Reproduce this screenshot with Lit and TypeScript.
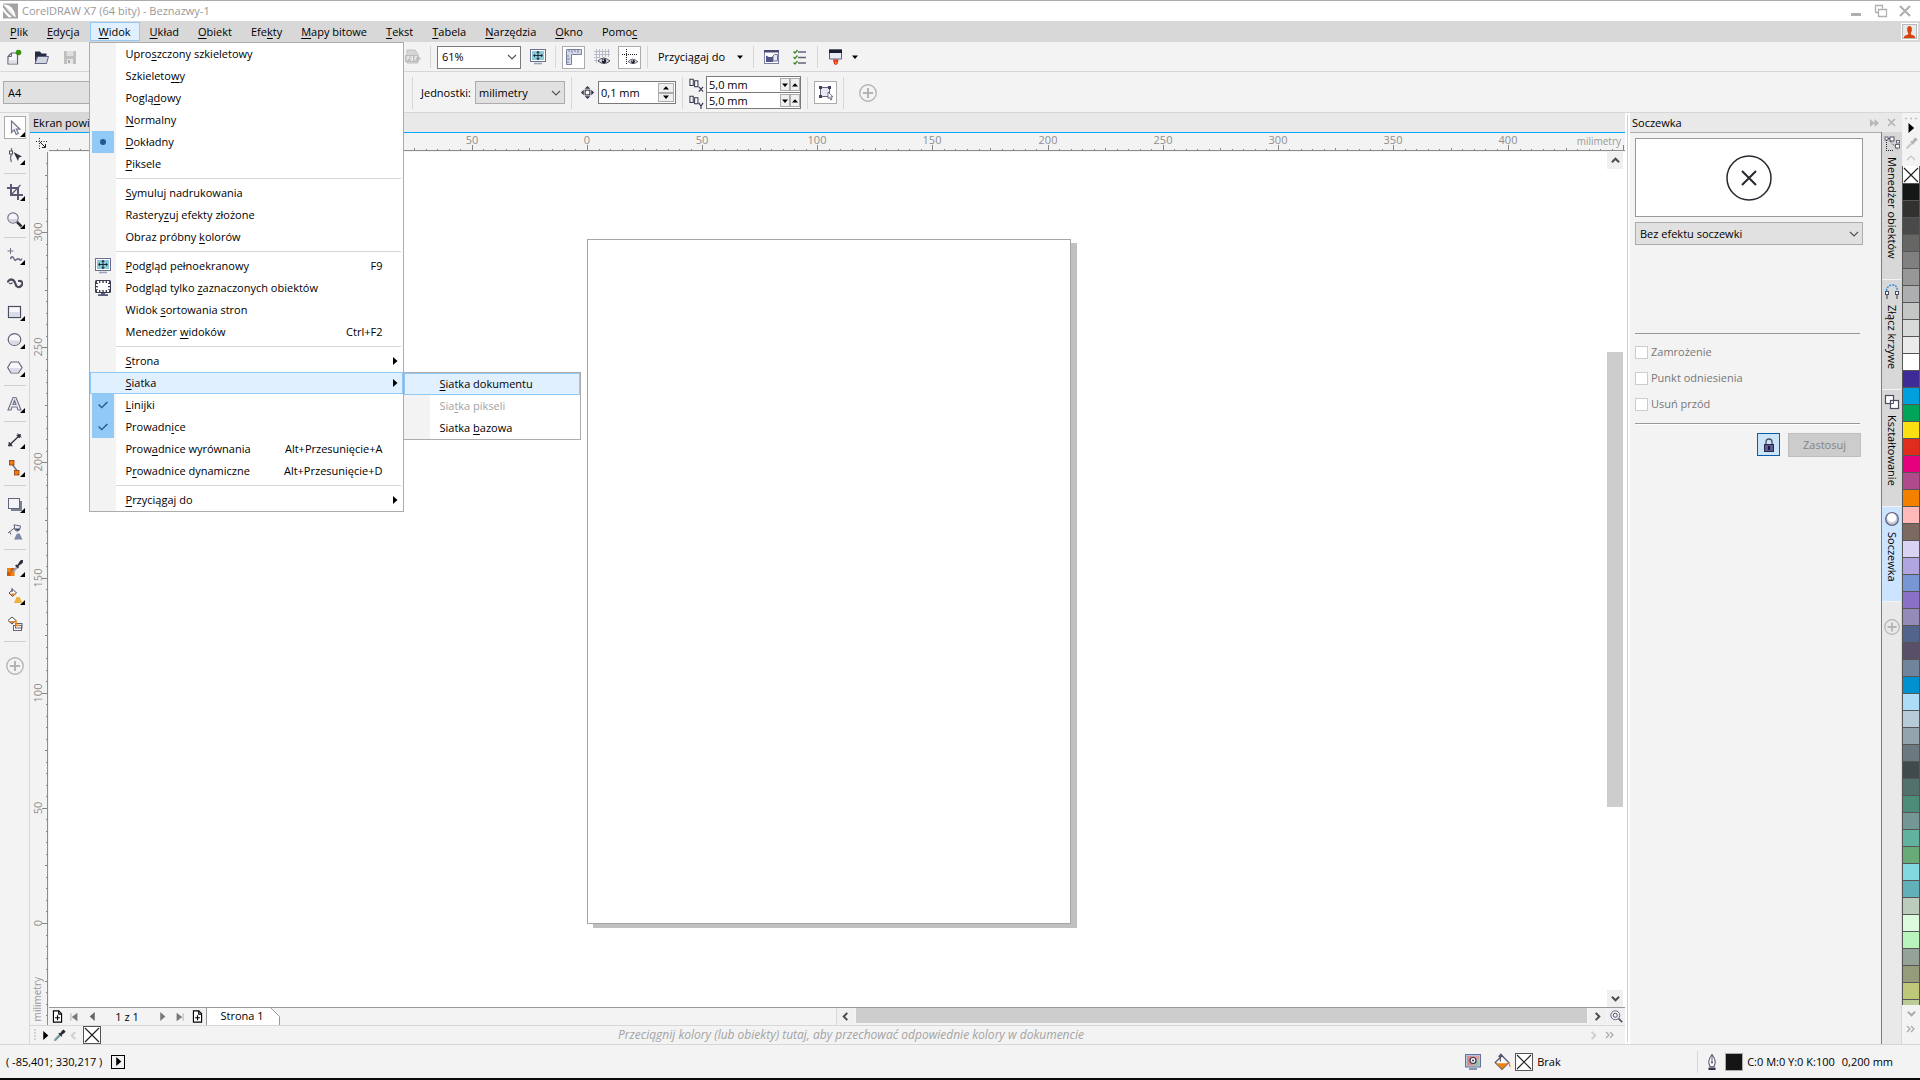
import { LitElement, html, svg, css, nothing, TemplateResult } from "lit";
import { customElement, property } from "lit/decorators.js";
import { classMap } from "lit/directives/class-map.js";
import { styleMap } from "lit/directives/style-map.js";

const PX_PER_MM = 2.303;

/** Turns "_Plik" into a label whose letter after the underscore is the mnemonic. */
const mnemonic = (label: string) => {
  const at = label.indexOf("_");
  if (at < 0) return html`${label}`;
  return html`${label.slice(0, at)}<u>${label[at + 1]}</u>${label.slice(at + 2)}`;
};

const icon = (body: TemplateResult | unknown, size = 16, cls = "") =>
  html`<svg class="icon ${cls}" width=${size} height=${size} viewBox="0 0 16 16" aria-hidden="true">${body}</svg>`;

const monitor = svg`<rect x="0.500" y="0.500" width="15" height="12" fill="#fff" stroke="#6b7192"/>
  <rect x="2" y="2" width="12" height="9" fill="#8cc9d6"/>
  <path d="M8 3v7M4 6.500h8" stroke="#1d2b3c" stroke-width="1"/>
  <path d="M8 1.800l1.800 2H6.200zM8 11.200l1.800-2H6.200zM3 6.500l2-1.800v3.600zM13 6.500l-2-1.800v3.600z" fill="#1d2b3c"/>
  <path d="M4 14.500h8" stroke="#9ba3bd" stroke-width="1.600"/>`;

const plusCircle = svg`<circle cx="8" cy="8" r="7.300" fill="none" stroke="#b4b4b4" stroke-width="1.200"/>
  <path d="M8 3.500v9M3.500 8h9" stroke="#b4b4b4" stroke-width="1.800"/>`;

const eyedropper = (tip: string, bulb: string) => svg`
  <path d="M1 15l1-3 6-6 2 2-6 6z" fill="${tip}"/>
  <path d="M6.500 5.500l1-1 1.200 1 2.300-3.500 2-1.500 2.500 2.500-1.500 2-3.500 2.300 1 1.200-1 1z" fill="${bulb}"/>`;

const bucket = svg`<path d="M2 8.500l6-6 6 6-6 6z" fill="#fff" stroke="#5a5d78" stroke-width="1.200"/>
  <path d="M2.500 9h11l-5.500 5.300z" fill="#ee8110"/>
  <path d="M6.500 1.500v6M5 3.500l2-2.500 2 2.500" fill="none" stroke="#4a4a5e"/>
  <path d="M13 7.500q3 1 2.500 5.500-1.500-1-1.500-4z" fill="#ee8110"/>`;

const eye = svg`<path d="M4 12q5-6 12 0-6 5-12 0z" fill="#d9dbe4" stroke="#3c3c4c" stroke-width="0.900"/>
  <circle cx="10" cy="12" r="2.300" fill="#1c1c28"/><circle cx="9.300" cy="11.200" r="0.800" fill="#fff"/>`;

const pageAdd = svg`<path d="M3 1h6.500l3.500 3.500V15H3z" fill="#fff" stroke="#000" stroke-width="1.400"/>
  <path d="M9.500 1v4H13M8 6.500v6M5 9.500h6" fill="none" stroke="#000" stroke-width="1.400"/>`;

const cross = svg`<path d="M1 1l14 14M15 1L1 15" stroke="#222" stroke-width="1.200"/>`;

const toolIcons: Record<string, unknown> = {
  pick: svg`<path d="M4.500 1v11.500l2.700-2.600 2 4.600 2.200-1-2-4.300h3.600z" fill="#f6f6fa" stroke="#75758c" stroke-width="1.200"/>`,
  shape: svg`<path d="M4.500 0v3M4.500 6q-2 4 0 8" fill="none" stroke="#75758c" stroke-width="1.300"/>
    <rect x="2.500" y="3" width="3" height="3" fill="#fff" stroke="#4c4c62"/>
    <path d="M6.500 4l8.500 4.500-3 1-1 3.500z" fill="#33333f"/>`,
  crop: svg`<path d="M4 0v11h12M0 4h11v12" fill="none" stroke="#5a5a74" stroke-width="2"/>
    <path d="M13.500 1L4 11" stroke="#5a5a74" stroke-width="1.200"/>`,
  zoom: svg`<circle cx="6" cy="6" r="5.200" fill="#f6f6fa" stroke="#75758c" stroke-width="1.200"/>
    <path d="M1.600 7h8.800a4.500 4.500 0 0 1-8.800 0z" fill="#cfd1dd"/>
    <path d="M10 10l4.500 4.500" stroke="#2e2e3c" stroke-width="2.500"/>`,
  freehand: svg`<path d="M3.500 0v6M0.500 3h6" stroke="#75758c" stroke-width="1"/>
    <path d="M3.500 11q1.500-4 3-1t2 2.300 2-1.300 2.200.8 2.300-1.300" fill="none" stroke="#63637c" stroke-width="1.400"/>`,
  artistic: svg`<path d="M1 5.500q2-3 5-1.500 2 1.500 2.500 4t2.500 3 3.500-1.500.5-3.500-3-1" fill="none" stroke="#4c4a5e" stroke-width="2.200" stroke-linecap="round"/>
    <path d="M2 7q2 1.500 3.500-.5" fill="none" stroke="#4c4a5e" stroke-width="1.200"/>`,
  rectangle: svg`<rect x="1.500" y="2.500" width="12" height="11" fill="#f8f8fb" stroke="#4c4c62" stroke-width="1.200"/>
    <rect x="2" y="8" width="11" height="5" fill="#d9dbe6"/>`,
  ellipse: svg`<ellipse cx="7.500" cy="7.500" rx="6.300" ry="5.800" fill="#f8f8fb" stroke="#63637a" stroke-width="1.200"/>
    <path d="M2 8.500h11a5.500 4.500 0 0 1-11 0z" fill="#d9dbe6"/>`,
  polygon: svg`<path d="M4 2h7.500l3.500 5.500-3.500 5.500H4L0.700 7.500z" fill="#f8f8fb" stroke="#63637a" stroke-width="1.200"/>
    <path d="M1.800 8h12.200l-3 4.400H4.300z" fill="#d9dbe6"/>`,
  text: svg`<path d="M1 14L6 1.500h3L14 14h-3l-1-3H5l-1 3zM6 8.500h3L7.500 4.500z" fill="#eceef5" stroke="#75758c" stroke-width="1.200"/>`,
  dimension: svg`<path d="M3 12.500L12 4" stroke="#33333f" stroke-width="1.400"/>
    <path d="M1.500 10.500l3.500 4M1.500 14l1-3.500 2.500 3zM10.500 1.500l4 4M13.500 2.500l-1 3.500-2.700-2.800z" fill="#33333f" stroke="#33333f" stroke-width="0.900"/>`,
  connector: svg`<path d="M5 4l6 8" stroke="#75758c" stroke-width="1.400"/>
    <rect x="2.500" y="0.500" width="4.500" height="4.500" fill="#f07d10" stroke="#8c3c10" stroke-width="0.800"/>
    <rect x="7.500" y="10.500" width="4.500" height="4.500" fill="#f07d10" stroke="#8c3c10" stroke-width="0.800"/>`,
  shadow: svg`<rect x="4" y="5" width="11" height="10" fill="#7c7f99"/>
    <rect x="1.500" y="2.500" width="11" height="10" fill="#f3f4f8" stroke="#63637a"/>`,
  transparency: svg`<path d="M1 9l6.500-5M7 0.800L13.500 2l-1 4q-2.500 2.500-4.500 0zM2.500 7.500l1.500 3" fill="#eceef5" stroke="#63637a" stroke-width="1"/>
    <path d="M7.500 4.500l5.500 0-1.500 2.200q-2 .5-4-2.200z" fill="#3c4c70"/><path d="M10 9.500h2.500l3 6H7z" fill="#7c88a8"/>`,
  dropper: svg`<rect x="0" y="8" width="7.500" height="8" fill="#ee8110"/><path d="M0 12h3.500v4H0zM4 8h3.500v4H4z" fill="#c85a10"/>
    <path d="M5 11l5-5 1.500 1.500-5 5z" fill="#9aa3bd"/><path d="M8 5.500l1.500-1 1 .5 2-3.500 1.500-1.500h2v2.500l-1.500 1.500-3 2 .5 1-1 1.500z" fill="#33333f"/>`,
  fill: svg`<path d="M2 5L6 1.500l3.500 3.500-4 3.500z" fill="#fff" stroke="#4c4c62" stroke-width="1"/>
    <path d="M3 5.500h6l-3.500 2.600z" fill="#ee8110"/><path d="M5 0v4" stroke="#4c4c62"/><path d="M9.500 9h3l3 6H7z" fill="#efb23c"/>`,
  smartFill: svg`<path d="M1 4.500L5 1l4 3.500-4 3.500z" fill="#fff" stroke="#4c4c62" stroke-width="1"/>
    <path d="M2.500 5h6l-3.500 2.600z" fill="#ee8110"/><rect x="6.500" y="9.500" width="8" height="5" fill="#fff" stroke="#63637a"/>
    <rect x="8.500" y="7.500" width="6.500" height="4.500" fill="none" stroke="#63637a"/><path d="M9 4v5.500h4" fill="none" stroke="#ee8110" stroke-width="1.500"/>`,
};

interface Tool { id: string; name: string; flyout?: boolean; active?: boolean }
const TOOL_GROUPS: Tool[][] = [
  [{ id: "pick", name: "Wskaźnik", flyout: true, active: true }, { id: "shape", name: "Kształt", flyout: true }],
  [{ id: "crop", name: "Kadrowanie", flyout: true }, { id: "zoom", name: "Lupa", flyout: true }],
  [
    { id: "freehand", name: "Krzywa", flyout: true },
    { id: "artistic", name: "Środki artystyczne" },
    { id: "rectangle", name: "Prostokąt", flyout: true },
    { id: "ellipse", name: "Elipsa", flyout: true },
    { id: "polygon", name: "Wielokąt", flyout: true },
  ],
  [{ id: "text", name: "Tekst", flyout: true }],
  [{ id: "dimension", name: "Wymiar", flyout: true }, { id: "connector", name: "Łącznik", flyout: true }],
  [{ id: "shadow", name: "Cień", flyout: true }, { id: "transparency", name: "Przezroczystość" }],
  [
    { id: "dropper", name: "Kroplomierz", flyout: true },
    { id: "fill", name: "Wypełnienie", flyout: true },
    { id: "smartFill", name: "Inteligentne wypełnienie" },
  ],
];

interface MenuEntry {
  label: string;
  keys?: string;
  mark?: "dot" | "check";
  glyph?: unknown;
  children?: MenuEntry[];
  arrow?: boolean;
  hot?: boolean;
  disabled?: boolean;
}

const selectionMonitor = svg`<rect x="0" y="0" width="16" height="13" rx="1.500" fill="#3e3c4e"/>
  <rect x="3" y="3" width="10" height="7" fill="#fff"/>
  <path d="M2 1h2v2H2zM5.300 1h2v2h-2zM8.700 1h2v2h-2zM12 1h2v2h-2zM2 10h2v2H2zM5.300 10h2v2h-2zM8.700 10h2v2h-2zM12 10h2v2h-2zM1 4h2v2H1zM1 7.200h2v2H1zM13 4h2v2h-2zM13 7.200h2v2h-2z" fill="#fff"/>
  <path d="M6 13h4v1.200h3V16H3v-1.800h3z" fill="#565a74"/>`;

const VIEW_MENU: MenuEntry[][] = [
  [
    { label: "Upro_szczony szkieletowy" },
    { label: "Szkieleto_wy" },
    { label: "Poglą_dowy" },
    { label: "_Normalny" },
    { label: "_Dokładny", mark: "dot" },
    { label: "_Piksele" },
  ],
  [{ label: "_Symuluj nadrukowania" }, { label: "Rastery_zuj efekty złożone" }, { label: "Obraz próbny _kolorów" }],
  [
    { label: "_Podgląd pełnoekranowy", keys: "F9", glyph: monitor },
    { label: "Podgląd tylko _zaznaczonych obiektów", glyph: selectionMonitor },
    { label: "Widok _sortowania stron" },
    { label: "Menedżer _widoków", keys: "Ctrl+F2" },
  ],
  [
    { label: "_Strona", arrow: true },
    {
      label: "_Siatka",
      arrow: true,
      hot: true,
      children: [
        { label: "_Siatka dokumentu", hot: true },
        { label: "Sia_tka pikseli", disabled: true },
        { label: "Siatka _bazowa" },
      ],
    },
    { label: "_Linijki", mark: "check" },
    { label: "Prowadn_ice", mark: "check" },
    { label: "Prow_adnice wyrównania", keys: "Alt+Przesunięcie+A" },
    { label: "P_rowadnice dynamiczne", keys: "Alt+Przesunięcie+D" },
  ],
  [{ label: "_Przyciągaj do", arrow: true }],
];

const MENU_BAR = ["_Plik", "_Edycja", "_Widok", "_Układ", "_Obiekt", "Efe_kty", "_Mapy bitowe", "_Tekst", "_Tabela", "_Narzędzia", "_Okno", "Pomo_c"];

const PALETTE = [
  "#151717", "#32312f", "#4a4a4a", "#666664", "#808080", "#979797", "#acaeb0", "#c4c6c5", "#d8dad9", "#ebebeb",
  "#ffffff", "#3f2b97", "#00a0dc", "#00a55a", "#fae013", "#e02c1c", "#e6007e", "#b04a8c", "#f28100", "#ffb9b9",
  "#7c6a60", "#d9d2f2", "#b0a5e0", "#7896d4", "#8b70c8", "#958bb8", "#52648c", "#585068", "#70859c", "#0092d0",
  "#acdcf6", "#b8cbd8", "#94a4ac", "#6b7880", "#404a4b", "#52706c", "#4c8c78", "#729794", "#62b2a0", "#68ab78",
  "#82dadf", "#62b0b8", "#bbcbbc", "#dcfadd", "#b8f4bc", "#94a298", "#949c7c", "#bec878", "#bccb98",
];

const DOCKER_TABS = [
  {
    label: "Menedżer obiektów",
    glyph: svg`<path d="M2.500 4v11M2 14.500h7M6 5l8 9" stroke="#222" stroke-dasharray="1 1"/>
      <rect x="1" y="1" width="3" height="3" fill="#fff" stroke="#63637a"/><rect x="6" y="1" width="4" height="4" fill="#fff" stroke="#4c4c62"/>
      <path d="M4 2.500h2" stroke="#4c4c62"/>
      <rect x="12.500" y="4.500" width="3" height="2.500" fill="#fff" stroke="#63637a"/><rect x="11.500" y="8.500" width="4" height="3.500" fill="#fff" stroke="#63637a"/>`,
  },
  {
    label: "Złącz krzywe",
    glyph: svg`<path d="M2.500 7Q3 1.500 8 1t5.500 6" fill="none" stroke="#2f8fe0" stroke-width="1.400" stroke-dasharray="2 1"/>
      <path d="M3 9v6M13 9v6" stroke="#63637a" stroke-width="1.400"/><rect x="1.500" y="7.500" width="3" height="3" fill="#fff" stroke="#4c4c62"/>
      <rect x="11.500" y="7.500" width="3" height="3" fill="#fff" stroke="#4c4c62"/>`,
  },
  {
    label: "Kształtowanie",
    glyph: svg`<rect x="1.500" y="1.500" width="8" height="8" fill="#fff" stroke="#4c4c62" stroke-width="1.200"/>
      <rect x="6.500" y="6.500" width="8" height="8" fill="#fff" stroke="#4c4c62" stroke-width="1.200"/><path d="M6.500 9.500h3v-3" fill="none" stroke="#4c4c62"/>`,
  },
  {
    label: "Soczewka",
    active: true,
    glyph: svg`<circle cx="8" cy="8" r="6.300" fill="#c9ccd8" stroke="#63637a" stroke-width="1.300"/><circle cx="7.700" cy="6.800" r="4.500" fill="#fff"/>`,
  },
];

/** Millimetre ruler; `origin` is the pixel at which 0 mm sits, labels stay inside `first`..`last`. */
@customElement("mm-ruler")
export class MmRuler extends LitElement {
  @property({ type: Boolean, reflect: true }) vertical = false;
  @property({ type: Number }) origin = 0;
  @property({ type: Number }) from = 0;
  @property({ type: Number }) to = 0;
  @property({ type: Number }) first = 0;
  @property({ type: Number }) last = 0;

  static styles = css`
    :host {
      display: block;
      overflow: hidden;
      background: #f3f3f3;
      border-bottom: 1px solid #8c8c8c;
      height: 18px;
      position: relative;
    }
    :host([vertical]) {
      border-bottom: 0;
      border-right: 1px solid #8c8c8c;
      width: 18px;
      height: auto;
      min-height: 0;
    }
    svg {
      display: block;
      position: absolute;
      width: 100%;
      height: 100%;
      overflow: hidden;
    }
    text {
      font: 11px "Liberation Sans Narrow", "Open Sans", sans-serif;
      fill: #8f8f8f;
      text-anchor: middle;
    }
    .unit {
      position: absolute;
      right: 2px;
      top: 1px;
      padding: 0 2px;
      font: 10px/14px "Open Sans", sans-serif;
      color: #999;
    }
    :host([vertical]) .unit {
      writing-mode: vertical-rl;
      transform: rotate(180deg);
      top: auto;
      right: 4px;
      bottom: 2px;
      line-height: 12px;
      padding: 2px 0;
    }
  `;

  render() {
    const marks = [];
    for (let mm = this.from; mm <= this.to; mm += 5) {
      const at = Math.round(this.origin + (this.vertical ? -mm : mm) * PX_PER_MM);
      const len = mm % 50 === 0 ? 5 : mm % 25 === 0 ? 2 : 1;
      marks.push(
        this.vertical
          ? svg`<rect x=${17 - len} y=${at} width=${len} height="1" fill="#858585"/>`
          : svg`<rect x=${at} y=${17 - len} width="1" height=${len} fill="#858585"/>`
      );
      if (mm % 50 === 0 && mm >= this.first && mm <= this.last) {
        marks.push(
          this.vertical
            ? svg`<text transform="translate(12 ${at}) rotate(-90)">${Math.abs(mm)}</text>`
            : svg`<text x=${at} y="11">${Math.abs(mm)}</text>`
        );
      }
    }
    return html`<svg aria-hidden="true">${marks}</svg><span class="unit">milimetry</span>`;
  }
}

@customElement("app-root")
export class AppRoot extends LitElement {
  static styles = css`
    :host {
      display: flex;
      flex-direction: column;
      height: 100vh;
      overflow: hidden;
      box-sizing: border-box;
      background: #f3f3f3;
      color: #000;
      font: 11px/16px "Open Sans", "Noto Sans", sans-serif;
      border-bottom: 2px solid #0a0a0a;
    }
    *,
    *::before,
    *::after { box-sizing: border-box; }
    button, input, select { font: inherit; color: inherit; margin: 0; border-radius: 0; }
    button { padding: 0; border: 1px solid transparent; background: none; }
    ul { margin: 0; padding: 0; list-style: none; }
    u { text-underline-offset: 2px; }
    .icon { display: block; flex: none; }

    .titlebar {
      display: flex;
      align-items: center;
      height: 21px;
      padding: 0 7px 0 3px;
      gap: 3px;
      background: #fff;
      border-top: 1px solid #acacac;
      color: #999;
    }
    .titlebar h1 { font: inherit; margin: 0; flex: 1; }
    .window-buttons { display: flex; gap: 8px; }

    .menubar { display: flex; align-items: stretch; gap: 1px; height: 21px; padding-left: 1px; background: #d8d8d8; }
    .menubar-item { position: relative; display: flex; padding: 1px 0; }
    .menubar-item > button { padding: 0 8px; line-height: 17px; white-space: nowrap; }
    .menubar-item > button.open { background: #e1f0fe; border-color: #93c8f7; }
    .account { margin: 2px 2px 2px auto; width: 17px; height: 17px; background: #fff; border: 1px solid #fff; }

    .menu {
      position: absolute;
      z-index: 5;
      top: 100%;
      left: -1px;
      width: 315px;
      background: linear-gradient(90deg, #f3f3f3 26px, #fff 26px);
      border: 1px solid #acacac;
    }
    .submenu { top: 0; left: 100%; width: 178px; }
    .menu li { position: relative; }
    .menu li.divider { height: 7px; padding: 3px 2px 3px 26px; }
    .menu li.divider::before { content: ""; display: block; height: 1px; background: #d7d7d7; }
    .menu-row {
      display: flex;
      align-items: center;
      width: 100%;
      height: 22px;
      padding-right: 3px;
      text-align: left;
      white-space: nowrap;
    }
    .menu-row.hot { background: #e1f0fe; border-color: #93c8f7; }
    .menu-row:disabled { color: #a3a3a3; }
    .gutter { display: flex; align-items: center; justify-content: center; width: 22px; height: 22px; margin: 0 12px 0 1px; flex: none; }
    .gutter.marked { background: #91c9f7; }
    .menu-label { flex: 1; }
    .menu-arrow { width: 16px; display: flex; justify-content: flex-end; }

    .toolbar { display: flex; align-items: center; gap: 5px; padding-top: 1px; border-bottom: 1px solid #d7d7d7; flex: none; }
    .standard { height: 30px; }
    .properties { height: 41px; }
    .file-tools { display: flex; align-items: center; gap: 5px; width: 424px; padding-left: 2px; }
    .file-tools .last { margin-left: auto; }
    .paper { width: 406px; padding-left: 3px; }
    .paper .select { width: 388px; }
    .sep { width: 1px; height: 22px; margin: 0 1px; background: #d7d7d7; flex: none; }
    .properties .sep { height: 32px; }
    .tool {
      display: flex;
      align-items: center;
      justify-content: center;
      width: 23px;
      height: 23px;
      flex: none;
    }
    .tool.on { background: #fff; border-color: #acacac; }
    .snap { display: flex; align-items: center; justify-content: space-between; width: 93px; height: 23px; padding: 0 3px; white-space: nowrap; }
    .caret { display: flex; align-items: center; height: 23px; }
    .field { display: flex; align-items: center; justify-content: space-between; gap: 3px; flex: none; }
    .units { width: 146px; padding-left: 2px; }
    .nudge { width: 98px; padding-left: 2px; }
    .select { position: relative; display: flex; align-items: center; }
    .select select {
      appearance: none;
      width: 100%;
      height: 23px;
      padding: 0 20px 0 4px;
      border: 1px solid #acacac;
      background: #e1e1e1;
    }
    .select svg { position: absolute; right: 4px; pointer-events: none; }
    .select.light select { background: #fff; border-color: #7a7a7a; }
    .zoom-level { width: 84px; }
    .units .select { width: 90px; }
    .units .select select { padding-left: 3px; }
    .spin { display: flex; border: 1px solid #7a7a7a; background: #fff; }
    .spin input { border: 0; padding: 0 2px; background: none; min-width: 0; flex: 1; outline: 0; }
    .spin button { display: flex; align-items: center; justify-content: center; border-color: #acacac; background: #f0f0f0; }
    .spin.tall { width: 78px; height: 23px; }
    .spin-buttons { display: grid; grid-template-rows: 1fr 1fr; width: 18px; padding: 1px; }
    .duplicate { display: grid; grid-template-columns: 15px 95px; column-gap: 2px; flex: none; }
    .duplicate .spin { height: 17px; }
    .duplicate .spin.lower { border-top: 0; height: 16px; }
    .duplicate .spin button { width: 10px; height: 13px; margin: 1px 0 0; }
    .duplicate .icon { align-self: center; }
    .customize { padding-left: 6px; }

    .workspace { display: flex; flex: 1; min-height: 0; }
    .toolbox { width: 30px; border-right: 1px solid #d7d7d7; flex: none; }
    .toolbox .rule { height: 8px; padding: 4px 3px 3px 4px; }
    .toolbox .rule::before { content: ""; display: block; height: 1px; background: #d0d0d0; }
    .toolbox li { height: 28px; padding: 3px 4px; }
    .toolbox .tool { position: relative; width: 22px; }
    .toolbox .add { padding: 9px 4px 0; }
    .flyout { position: absolute; right: 0; bottom: 1px; }

    .document { display: flex; flex-direction: column; flex: 1; min-width: 0; }
    .doc-tabs { display: flex; height: 20px; background: #e9e9e9; border-bottom: 1px solid #00a8ff; flex: none; }
    .doc-tabs button { padding: 0 3px; background: #d8d8d8; border: 0; line-height: 19px; }
    .drawing { display: grid; grid-template-columns: 19px 1fr; grid-template-rows: 19px 1fr 18px; flex: 1; min-height: 0; }
    .origin { display: flex; align-items: flex-end; justify-content: flex-end; padding: 0 2px 3px 0; }
    .vruler { grid-row: 2 / 4; grid-column: 1; display: flex; }
    .view { display: flex; min-height: 0; min-width: 0; background: #fff; }
    .canvas { position: relative; flex: 1; overflow: hidden; background: #fff; }
    .page { position: absolute; left: 538px; top: 87px; width: 484px; height: 685px; border: 1px solid #a6a6a6; background: #fff; box-shadow: 6px 4px 0 #c0c0c0; }
    .vscroll { display: flex; flex-direction: column; width: 18px; padding-right: 2px; background: #fff; }
    .vscroll .track { display: grid; grid-template-rows: 183fr 455fr 183fr; flex: 1; }
    .vscroll .thumb { grid-row: 2; background: #cdcdcd; }
    .scroll-button { display: flex; align-items: center; justify-content: center; width: 17px; height: 17px; border: 0; background: #f0f0f0; flex: none; }
    .vscroll .scroll-button { width: 16px; }
    .bottom { display: grid; grid-template-columns: 1fr 1fr; border-top: 1px solid #999; min-width: 0; }
    .pager { display: flex; align-items: center; border-right: 1px solid #d7d7d7; }
    .pager button { display: flex; align-items: center; justify-content: center; height: 17px; width: 18px; border: 0; }
    .pager output { width: 52px; text-align: center; }
    .pager .wide { width: 16px; }
    .pager .page-tab { position: relative; width: 74px; margin-left: 1px; background: #fff; border-left: 1px solid #999; clip-path: polygon(0 0, 66px 0, 100% 8px, 100% 100%, 0 100%); padding-right: 3px; line-height: 15px; align-items: flex-start; }
    .tab-corner { position: absolute; right: 0; top: 0; }
    .hscroll { display: flex; gap: 2px; }
    .hscroll .track { flex: 1; background: #cdcdcd; height: 15px; }
    .hscroll .scroll-button { height: 16px; }
    .doc-palette { display: flex; align-items: center; height: 19px; gap: 3px; padding: 0 10px 0 3px; border-top: 1px solid #d7d7d7; flex: none; }
    .doc-palette p { flex: 1; margin: 0; padding-left: 12px; text-align: center; font-size: 12px; font-style: italic; color: #a3a3a3; }
    .doc-palette button { display: flex; border: 0; }
    .no-color { display: flex; align-items: center; justify-content: center; width: 18px; height: 18px; background: #fff; border: 1px solid #555; flex: none; }
    .doc-palette .no-color { border: 1px solid #555; margin-left: 2px; }
    .doc-palette p + button { margin-right: 4px; }

    .splitter { width: 5px; background: #f3f3f3; border-left: 2px solid #fff; border-right: 2px solid #fff; padding: 2px 0; flex: none; }
    .splitter::before { content: ""; display: block; width: 1px; height: 100%; background: #cfcfcf; }
    .docker { display: grid; grid-template-columns: 251px 21px; grid-template-rows: 19px 1fr; flex: none; }
    .docker-header { grid-column: 1 / 3; display: flex; align-items: center; gap: 6px; padding: 0 5px 0 2px; background: #e9e9e9; color: #000; }
    .docker-header h2 { font: inherit; margin: 0; flex: 1; }
    .docker-header button { display: flex; }
    .docker-body { border-top: 1px solid #acacac; padding: 5px 18px 0 5px; }
    .preview { display: flex; align-items: center; justify-content: center; height: 79px; border: 1px solid #999; background: #fff; }
    .docker-body .select { margin-top: 5px; }
    .options { margin: 88px 3px 0 0; height: 91px; padding-top: 10px; border: solid #999; border-width: 1px 0; display: flex; flex-direction: column; gap: 10px; box-shadow: 0 1px 0 #fff; }
    .options label { display: flex; align-items: center; gap: 3px; height: 16px; color: #777; }
    .options input { appearance: none; width: 13px; height: 13px; margin: 0; border: 1px solid #ccc; background: #fff; }
    .apply { display: flex; justify-content: flex-end; gap: 8px; padding: 9px 2px 0 0; }
    .apply .lock { width: 23px; height: 23px; border-color: #0a5ba8; background: #cce4f7; }
    .apply .go { width: 73px; height: 24px; background: #ccc; border-color: #bfbfbf; color: #838383; }
    .docker-tabs { display: flex; flex-direction: column; background: #e9e9e9; border-left: 1px solid #0aa2e8; border-right: 1px solid #d7d7d7; }
    .docker-tabs button {
      display: flex;
      flex-direction: column;
      align-items: center;
      width: 19px;
      gap: 5px;
      padding: 4px 0 20px;
      border: 0;
      border-bottom: 1px solid #f3f3f3;
      background: #d8d8d8;
    }
    .docker-tabs button.active { background: #cce4ff; }
    .docker-tabs .label { writing-mode: vertical-rl; line-height: 18px; }
    .docker-tabs .add { background: none; border: 0; padding-top: 17px; }

    .palette { display: flex; flex-direction: column; width: 18px; flex: none; }
    .palette-head { display: flex; flex-direction: column; align-items: center; justify-content: space-between; height: 53px; padding: 4px 0 3px; }
    .swatches { flex: 1; min-height: 0; overflow: hidden; background: #555; padding: 0 1px; }
    .swatches button { display: block; width: 16px; height: 16px; border: 0; margin-bottom: 1px; }
    .swatches .none { display: flex; align-items: center; justify-content: center; background: #fff; height: 17px; }
    .palette-foot { display: flex; flex-direction: column; align-items: center; gap: 7px; height: 39px; padding-top: 4px; }

    .status { display: flex; align-items: center; height: 34px; padding: 0 27px 0 6px; border-top: 1px solid #d7d7d7; flex: none; white-space: nowrap; }
    .status .grow { flex: 1; }
    .status .play { display: flex; align-items: center; justify-content: center; width: 14px; height: 14px; border: 1px solid #000; margin-left: 9px; }
    .status .fill { display: flex; align-items: center; gap: 4px; width: 232px; }
    .status .outline { display: flex; align-items: center; gap: 4px; height: 22px; padding-left: 6px; border-left: 1px solid #d7d7d7; }
    .status .proof { margin-right: 8px; }
    .status .ink { width: 18px; height: 18px; background: #151515; border: 1px solid #acacac; margin-left: 1px; }
    .status .width { margin-left: 3px; }
  `;

  private chevron(color = "#555", flip = 0) {
    return html`<svg class="icon" width="10" height="10" viewBox="0 0 10 10" aria-hidden="true">
      <path d="M1 3l4 4 4-4" transform="rotate(${flip} 5 5)" fill="none" stroke=${color} stroke-width="1.200" />
    </svg>`;
  }

  private scrollChevron(turn: number, color = "#4c4c4c") {
    return html`<svg class="icon" width="9" height="9" viewBox="0 0 10 10" aria-hidden="true">
      <path d="M1 3l4 4 4-4" transform="rotate(${turn} 5 5)" fill="none" stroke=${color} stroke-width="2.200" />
    </svg>`;
  }

  private triangle(turn: number, w = 6, color = "#000") {
    return html`<svg class="icon" width=${w} height=${w} viewBox="0 0 8 8" aria-hidden="true">
      <path d="M0 2h8L4 6.500z" transform="rotate(${turn} 4 4)" fill=${color} />
    </svg>`;
  }

  private double(color = "#ababab") {
    return html`<svg class="icon" width="10" height="8" viewBox="0 0 10 8" aria-hidden="true">
      <path d="M1 1l3 3-3 3M5 1l3 3-3 3" fill="none" stroke=${color} stroke-width="1.300" />
    </svg>`;
  }

  private menuItem(e: MenuEntry): TemplateResult {
    return html`<li role="none">
      <button class=${classMap({ "menu-row": true, hot: !!e.hot })} role="menuitem" ?disabled=${e.disabled}>
        <span class=${classMap({ gutter: true, marked: !!e.mark })}>
          ${e.mark === "dot" ? icon(svg`<circle cx="8" cy="8" r="3" fill="#1f5a8f"/>`) : nothing}
          ${e.mark === "check" ? icon(svg`<path d="M3 7.500l3.500 3.500L13 4.500" fill="none" stroke="#1f5a8f" stroke-width="1.600"/>`, 14) : nothing}
          ${e.glyph ? icon(e.glyph) : nothing}
        </span>
        <span class="menu-label">${mnemonic(e.label)}</span>
        ${e.keys ? html`<span>${e.keys}</span>` : nothing}
        <span class="menu-arrow">${e.arrow ? this.triangle(-90, 8) : nothing}</span>
      </button>
      ${e.children ? html`<ul class="menu submenu" role="menu">${e.children.map((c) => this.menuItem(c))}</ul>` : nothing}
    </li>`;
  }

  private renderMenuBar() {
    return html`<nav class="menubar" aria-label="Menu">
      ${MENU_BAR.map((label) => {
        const open = label === "_Widok";
        return html`<div class="menubar-item">
          <button class=${classMap({ open })}>${mnemonic(label)}</button>
          ${open
            ? html`<ul class="menu" role="menu">
                ${VIEW_MENU.map((group, i) => html`${i ? html`<li class="divider" role="separator"></li>` : nothing}${group.map((e) => this.menuItem(e))}`)}
              </ul>`
            : nothing}
        </div>`;
      })}
      <button class="account" aria-label="Konto">
        ${icon(svg`<rect x="0.500" y="0.500" width="15" height="15" fill="#e9e9e9" stroke="#b5b5b5"/><path d="M2 15q0-3 4-3.500l.8-1.500Q5 7 5.500 4.500 6 2 8 2t2.500 2.500Q11 7 9.200 10l.8 1.500q4 .5 4 3.500z" fill="#d9420e"/>`, 15)}
      </button>
    </nav>`;
  }

  private renderStandardBar() {
    return html`<div class="toolbar standard" role="toolbar">
      <div class="file-tools">
        <button class="tool" aria-label="Nowy">
          ${icon(svg`<path d="M2 7.500L5.500 4H11.500v11H2z" fill="#f8f8fb" stroke="#63637a" stroke-width="1.200"/><path d="M2 7.500h3.500V4" fill="none" stroke="#63637a"/><path d="M2.600 11h8.300v3.500H2.600z" fill="#dfe1ea"/><circle cx="12.500" cy="3.500" r="2.800" fill="#37910f"/>`)}
        </button>
        <button class="tool" aria-label="Otwórz">
          ${icon(svg`<path d="M1 14V2.500h5L7.500 4.500H12.500V8H3z" fill="#262b45"/><path d="M1 14.500L3.800 7.500H14.500l-2 7z" fill="#d2d6e3" stroke="#50587a" stroke-width="0.900"/>`)}
        </button>
        <button class="tool" aria-label="Zapisz">
          ${icon(svg`<path d="M2 2h12v13H2z" fill="#bfbfbf"/><rect x="4.500" y="2" width="7" height="5" fill="#dedede"/><rect x="5" y="10" width="6" height="5" fill="#e6e6e6"/><rect x="6" y="11" width="2" height="3" fill="#aaa"/>`)}
        </button>
        <button class="tool last" aria-label="PDF">
          ${icon(svg`<path d="M2 1h8l3 4v9H2z" fill="#d6d6d6" stroke="#c0c0c0"/><path d="M0 6h12l4 3.500-4 3.500H0z" fill="#bdbdbd"/><path d="M2 11.500v-4h2v2H2M6 7.500v4h1.500v-4zM10 11.500v-4h2M10 9.500h1.500" fill="none" stroke="#eee"/>`)}
        </button>
      </div>
      <span class="sep"></span>
      <div class="select light zoom-level">
        <select aria-label="Powiększenie"><option>61%</option></select>${this.chevron()}
      </div>
      <button class="tool" aria-label="Podgląd pełnoekranowy">${icon(monitor)}</button>
      <span class="sep"></span>
      <button class="tool on" aria-label="Linijki">
        ${icon(svg`<path d="M0.500 0.500h15v5h-10v10h-5z" fill="#d4dae8" stroke="#7880a0"/><path d="M3 1v2M6 1v3M9 1v2M12 1v3M1 7h2M1 10h3M1 13h2" stroke="#7880a0"/>`)}
      </button>
      <button class="tool" aria-label="Siatka">
        ${icon(svg`<path d="M2.500 0v14M5.500 0v9M8.500 0v8M11.500 0v8M14.500 0v8M0 2.500h16M0 5.500h16M0 8.500h5M0 11.500h4" stroke="#b4b6c6" stroke-width="0.900"/>${eye}`)}
      </button>
      <button class="tool on" aria-label="Prowadnice">
        ${icon(svg`<path d="M4.500 0v16" stroke="#222" stroke-dasharray="1 1"/><path d="M0 5.500h16" stroke="#222" stroke-dasharray="1 1"/><g transform="translate(3 3) scale(0.800)">${eye}</g>`)}
      </button>
      <span class="sep"></span>
      <button class="snap">Przyciągaj do ${this.triangle(0)}</button>
      <span class="sep"></span>
      <button class="tool" aria-label="Ekran powitalny">
        ${icon(svg`<rect x="0.500" y="1.500" width="14" height="13" fill="#fff" stroke="#7c80a0"/><rect x="0" y="1" width="15" height="2.500" fill="#4a4c74"/><path d="M2 6.500l3 1.500h3l1-1v6H2z" fill="#50558a"/><path d="M9 7l1.500-1.500h3V12H9z" fill="#e7e9f2" stroke="#63637a" stroke-width="0.900"/>`)}
      </button>
      <button class="tool" aria-label="Opcje">
        ${icon(svg`<path d="M6 3h8M6 8.500h8M6 14h8" stroke="#63637a" stroke-width="1.300"/><path d="M1.500 2.500l1.500 1.500L5.500 1M1.500 8l1.500 1.500L5.500 6.500M1.500 13.500l1.500 1.500L5.500 12" fill="none" stroke="#3c8c1c" stroke-width="1.300"/>`)}
      </button>
      <span class="sep"></span>
      <button class="tool" aria-label="Uruchom">
        ${icon(svg`<path d="M1.500 1h12v9h-12z" fill="#e9ebf3" stroke="#5c5f84"/><rect x="1" y="0.500" width="13" height="3.500" fill="#1c1c30"/><path d="M5 10.500h5.500l-.5 2.500q0 2.500-2.200 3-2.300-.5-2.300-3z" fill="#e0301c"/><path d="M7 12.500h1.500v2H7z" fill="#ffb400"/>`)}
      </button>
      <span class="caret">${this.triangle(0)}</span>
    </div>`;
  }

  private spinPair() {
    return html`<button tabindex="-1" aria-label="Mniej">${this.triangle(0, 6)}</button
      ><button tabindex="-1" aria-label="Więcej">${this.triangle(180, 6)}</button>`;
  }

  private duplicateIcon(axis: TemplateResult) {
    return icon(svg`<path d="M1 2.500h3.500v6.500H1zM6 4h3.500v6.500H6z" fill="#fff" stroke="#33334c" stroke-width="1.100"/>${axis}`, 15);
  }

  private renderPropertyBar() {
    return html`<div class="toolbar properties" role="toolbar">
      <div class="paper">
        <div class="select"><select aria-label="Rozmiar strony"><option>A4</option></select></div>
      </div>
      <span class="sep"></span>
      <div class="field units">
        <label for="units">Jednostki:</label>
        <div class="select"><select id="units"><option>milimetry</option></select>${this.chevron()}</div>
      </div>
      <span class="sep"></span>
      <div class="field nudge">
        ${icon(svg`<rect x="5.500" y="5.500" width="5" height="5" fill="#fff" stroke="#33334c" stroke-width="1.200"/><path d="M8 1l3 3H5zM8 15l3-3H5zM1 8l3-3v6zM15 8l-3-3v6z" fill="#33334c"/>`, 15)}
        <div class="spin tall">
          <input aria-label="Odległość podsuwania" value="0,1 mm" />
          <div class="spin-buttons">
            <button tabindex="-1" aria-label="Więcej">${this.triangle(180)}</button>
            <button tabindex="-1" aria-label="Mniej">${this.triangle(0)}</button>
          </div>
        </div>
      </div>
      <span class="sep"></span>
      <div class="duplicate">
        ${this.duplicateIcon(svg`<path d="M10.500 10.500l4.500 5M15 10.500l-4.500 5" stroke="#33334c" stroke-width="1.200"/>`)}
        <div class="spin"><input aria-label="Odległość powielania X" value="5,0 mm" />${this.spinPair()}</div>
        ${this.duplicateIcon(svg`<path d="M10.500 9.500l2.300 3.500L15 9.500M12.800 13v3" fill="none" stroke="#33334c" stroke-width="1.200"/>`)}
        <div class="spin lower"><input aria-label="Odległość powielania Y" value="5,0 mm" />${this.spinPair()}</div>
      </div>
      <span class="sep"></span>
      <button class="tool on" aria-label="Traktuj jako wypełnione">
        ${icon(svg`<rect x="2.500" y="2.500" width="9" height="9" fill="#e7e9f2" stroke="#63637a"/><path d="M1 1h3v3H1zM10 1h3v3h-3zM1 10h3v3H1z" fill="#3e3f5c"/><path d="M10 7v6.500l1.500-1.300 1.200 2.800 1.300-.6-1.200-2.600h2.200z" fill="#fff" stroke="#63637a" stroke-width="0.900"/>`)}
      </button>
      <span class="sep"></span>
      <div class="customize"><button class="tool" aria-label="Szybkie dostosowywanie">${icon(plusCircle, 18)}</button></div>
    </div>`;
  }

  private renderToolbox() {
    return html`<nav class="toolbox" aria-label="Przybornik">
      ${TOOL_GROUPS.map(
        (group) => html`<ul>
            ${group.map(
              (t) => html`<li>
                <button class=${classMap({ tool: true, on: !!t.active })} aria-label=${t.name}>
                  ${icon(toolIcons[t.id])}
                  ${t.flyout ? html`<svg class="flyout" width="5" height="5" viewBox="0 0 5 5" aria-hidden="true"><path d="M5 0v5H0z" /></svg>` : nothing}
                </button>
              </li>`
            )}
          </ul>
          <div class="rule"></div>`
      )}
      <div class="add"><button class="tool" aria-label="Dostosuj przybornik">${icon(plusCircle, 18)}</button></div>
    </nav>`;
  }

  private renderDocument() {
    return html`<main class="document">
      <div class="doc-tabs"><button>Ekran powitalny</button></div>
      <div class="drawing">
        <div class="origin">
          <svg width="11" height="11" viewBox="0 0 11 11" aria-hidden="true">
            <path d="M3.500 0v11M0 3.500h11" stroke="#222" stroke-dasharray="1 1.500" />
            <path d="M4 4l5 5M9.500 6v3.500H6" fill="none" stroke="#222" />
          </svg>
        </div>
        <mm-ruler .origin=${538} .from=${-230} .to=${465} .first=${-50} .last=${400}></mm-ruler>
        <div class="vruler"><mm-ruler vertical .origin=${771} .from=${-40} .to=${330} .first=${0} .last=${300}></mm-ruler></div>
        <div class="view">
          <div class="canvas"><div class="page"></div></div>
          <div class="vscroll">
            <button class="scroll-button" aria-label="W górę">${this.scrollChevron(180)}</button>
            <div class="track"><div class="thumb"></div></div>
            <button class="scroll-button" aria-label="W dół">${this.scrollChevron(0)}</button>
          </div>
        </div>
        <div class="bottom">
          <div class="pager">
            <button class="wide" aria-label="Dodaj stronę przed">${icon(pageAdd, 13)}</button>
            <button aria-label="Pierwsza">${icon(svg`<path d="M3 2v12M13 2v12L5 8z" fill="#777" stroke="#777" stroke-width="0.800"/>`, 10)}</button>
            <button aria-label="Poprzednia">${this.triangle(90, 9, "#666")}</button>
            <output>1 z 1</output>
            <button aria-label="Następna">${this.triangle(-90, 9, "#777")}</button>
            <button aria-label="Ostatnia">${icon(svg`<path d="M13 2v12M3 2v12l8-6z" fill="#777" stroke="#777" stroke-width="0.800"/>`, 10)}</button>
            <button class="wide" aria-label="Dodaj stronę po">${icon(pageAdd, 13)}</button>
            <button class="page-tab">Strona 1
              <svg class="tab-corner" width="9" height="17" viewBox="0 0 9 17" aria-hidden="true"><path d="M0 0l8.500 8.500V17" fill="none" stroke="#999" /></svg>
            </button>
          </div>
          <div class="hscroll">
            <button class="scroll-button" aria-label="W lewo">${this.scrollChevron(90)}</button>
            <div class="track"></div>
            <button class="scroll-button" aria-label="W prawo">${this.scrollChevron(-90)}</button>
            <button class="scroll-button" aria-label="Nawigator">
              ${icon(svg`<circle cx="6.500" cy="6.500" r="5.500" fill="#f3f3f8" stroke="#63637a" stroke-width="1.200"/><circle cx="6.500" cy="6.500" r="2.500" fill="none" stroke="#4c4c62" stroke-width="1.200"/><path d="M10.500 10.500l4.500 4.500" stroke="#4c4c62" stroke-width="2"/>`, 13)}
            </button>
          </div>
        </div>
      </div>
      <div class="doc-palette">
        <svg width="5" height="12" viewBox="0 0 5 12" aria-hidden="true"><path d="M1 1h2M1 4h2M1 7h2M1 10h2" stroke="#b5b5b5" /></svg>
        <button aria-label="Menu palety">${this.triangle(-90, 9)}</button>
        <button aria-label="Kroplomierz">${icon(eyedropper("#6f9a9c", "#2a2838"), 13)}</button>
        <button aria-label="Wstecz">${this.scrollChevron(90, "#cfcfcf")}</button>
        <button class="no-color" aria-label="Bez koloru">${icon(cross)}</button>
        <p>Przeciągnij kolory (lub obiekty) tutaj, aby przechować odpowiednie kolory w dokumencie</p>
        <button aria-label="Dalej">${this.scrollChevron(-90, "#cfcfcf")}</button>
        <button aria-label="Rozwiń">${this.double()}</button>
      </div>
    </main>`;
  }

  private renderDocker() {
    return html`<aside class="docker">
      <header class="docker-header">
        <h2>Soczewka</h2>
        <button aria-label="Zwiń">
          <svg width="9" height="8" viewBox="0 0 9 8" aria-hidden="true"><path d="M0 0l4.500 4L0 8zM4.500 0L9 4 4.500 8z" fill="#b5b5b5" /></svg>
        </button>
        <button aria-label="Zamknij">
          <svg width="9" height="9" viewBox="0 0 9 9" aria-hidden="true"><path d="M1 1l7 7M8 1L1 8" stroke="#b0b0b0" stroke-width="1.500" /></svg>
        </button>
      </header>
      <div class="docker-body">
        <div class="preview">
          <svg width="48" height="48" viewBox="0 0 48 48" aria-hidden="true">
            <circle cx="24" cy="24" r="22" fill="none" stroke="#29272f" stroke-width="1.500" />
            <path d="M17 17l14 14M31 17L17 31" stroke="#29272f" stroke-width="2" />
          </svg>
        </div>
        <div class="select">
          <select aria-label="Efekt soczewki"><option>Bez efektu soczewki</option></select>${this.chevron()}
        </div>
        <div class="options">
          <label><input type="checkbox" disabled />Zamrożenie</label>
          <label><input type="checkbox" disabled />Punkt odniesienia</label>
          <label><input type="checkbox" disabled />Usuń przód</label>
        </div>
        <div class="apply">
          <button class="tool lock" aria-label="Blokada">
            ${icon(svg`<path d="M5 7.500V5q0-3 3-3t3 3v2.500" fill="none" stroke="#4c4c62" stroke-width="1.300"/><rect x="3.500" y="7.500" width="9" height="7" fill="#5d5c94" stroke="#2a2a44"/><path d="M8 9v4" stroke="#15152a" stroke-width="1.800"/>`)}
          </button>
          <button class="go" disabled>Zastosuj</button>
        </div>
      </div>
      <nav class="docker-tabs" aria-label="Okna dokowane">
        ${DOCKER_TABS.map(
          (t) => html`<button class=${classMap({ active: !!t.active })}>${icon(t.glyph)}<span class="label">${t.label}</span></button>`
        )}
        <button class="add" aria-label="Dodaj">${icon(plusCircle)}</button>
      </nav>
    </aside>`;
  }

  private renderPalette() {
    return html`<div class="palette" role="group" aria-label="Paleta kolorów">
      <div class="palette-head">
        <svg width="12" height="3" viewBox="0 0 12 3" aria-hidden="true"><path d="M0 1.500h2M5 1.500h2M10 1.500h2" stroke="#c0c0c0" stroke-width="1.500" /></svg>
        ${this.triangle(-90, 10)} ${icon(eyedropper("#c9c9c9", "#b0b0b0"), 13)} ${this.chevron("#c4c4c4", 180)}
      </div>
      <div class="swatches">
        <button class="none" aria-label="Bez koloru">${icon(cross)}</button>
        ${PALETTE.map((c) => html`<button aria-label=${c} style=${styleMap({ background: c })}></button>`)}
      </div>
      <div class="palette-foot">${this.scrollChevron(0, "#ababab")} ${this.double()}</div>
    </div>`;
  }

  private renderStatus() {
    return html`<footer class="status">
      <span>( -85,401; 330,217 )</span>
      <button class="play" aria-label="Odtwórz">${this.triangle(-90, 9)}</button>
      <span class="grow"></span>
      <div class="fill">
        <span class="proof">${icon(svg`<rect x="0.500" y="0.500" width="15" height="12.500" fill="#b9c4dc" stroke="#63709a"/><path d="M2 2h6v9.500H2z" fill="#d88c8c"/><path d="M8 2h6v4H8z" fill="#d8a0a0"/><path d="M8 7h6v4.500H8z" fill="#9cc0a4"/><circle cx="8" cy="6.500" r="3" fill="#fff" stroke="#33334c" stroke-width="1.200"/><circle cx="8" cy="6.500" r="1" fill="#33334c"/><path d="M4 15h8" stroke="#63709a" stroke-width="1.500"/>`)}</span>
        ${icon(bucket, 18)}
        <span class="no-color">${icon(cross)}</span>
        <span>Brak</span>
      </div>
      <div class="outline">
        ${icon(svg`<path d="M8 0.500Q4 6 5 9.500l1 3h4l1-3Q12 6 8 0.500z" fill="#fff" stroke="#63637a" stroke-width="1.200"/><path d="M8 1v7" stroke="#63637a"/><circle cx="8" cy="8.500" r="1" fill="#4c4c62"/><path d="M4.500 13.500h7V16h-7z" fill="#33334c"/>`)}
        <span class="ink"></span>
        <span>C:0 M:0 Y:0 K:100</span><span class="width">0,200 mm</span>
      </div>
    </footer>`;
  }

  render() {
    return html`
      <header class="titlebar">
        ${icon(svg`<rect y="0.500" width="15" height="15" fill="#a3a3a3"/><path d="M0 1l6 1.500q5 3 7 11.500l-3-1Q5 8 0 1z" fill="#fff"/><path d="M0 4.500q4 6 9 9.500l-3 .5Q2 11 0 8z" fill="#fff"/><path d="M3 4.500q4 3 8 9" stroke="#c4c4c4" stroke-width="0.700" fill="none"/>`)}
        <h1>CorelDRAW X7 (64 bity) - Beznazwy-1</h1>
        <div class="window-buttons">
          ${icon(svg`<path d="M2 11.500h10" stroke="#b0b0b0" stroke-width="3"/>`)}
          ${icon(svg`<path d="M2.500 9.500v-7h7v3M2.500 9.500h3M5.500 6.500h8v7h-8z" fill="none" stroke="#b0b0b0" stroke-width="1.300"/>`)}
          ${icon(svg`<path d="M3 3l10 10M13 3L3 13" stroke="#b0b0b0" stroke-width="2.200"/>`)}
        </div>
      </header>
      ${this.renderMenuBar()} ${this.renderStandardBar()} ${this.renderPropertyBar()}
      <div class="workspace">
        ${this.renderToolbox()} ${this.renderDocument()}
        <div class="splitter"></div>
        ${this.renderDocker()} ${this.renderPalette()}
      </div>
      ${this.renderStatus()}
    `;
  }
}
